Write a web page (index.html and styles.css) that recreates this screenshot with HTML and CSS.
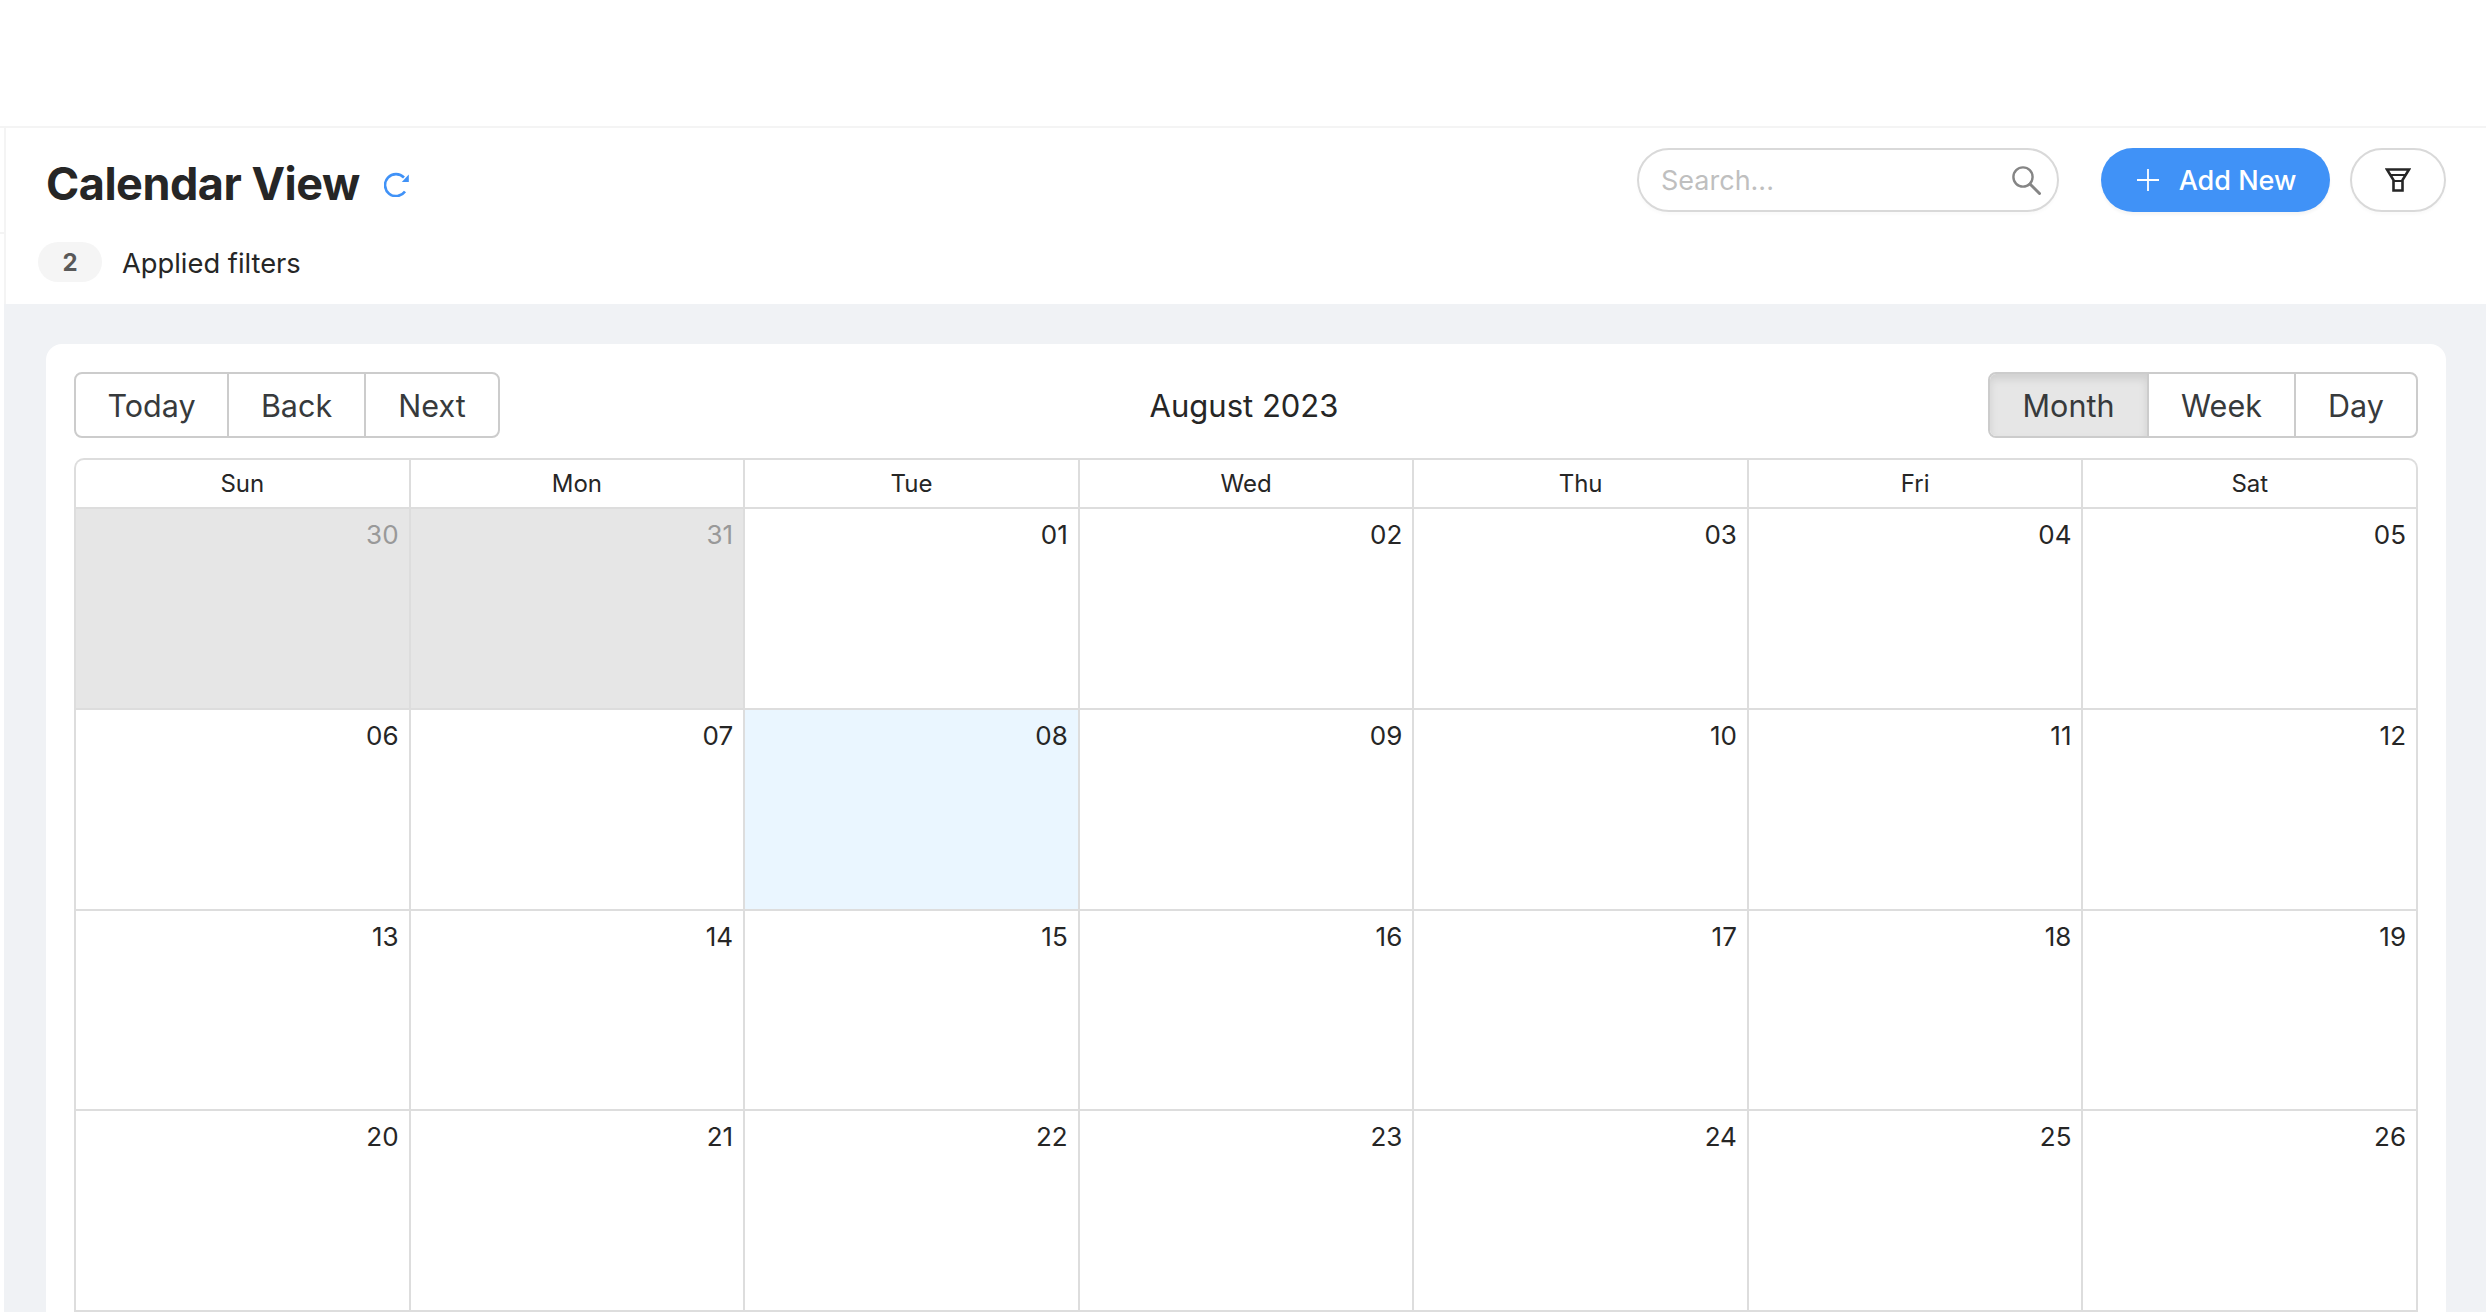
FILE: index.html
```html
<!DOCTYPE html>
<html lang="en">
<head>
    <meta charset="UTF-8">
    <meta name="viewport" content="width=device-width, initial-scale=1.0">
    <title>Calendar View</title>
    <link rel="stylesheet" href="styles.css">
</head>
<body>
    <div class="topbar"></div>
    <div class="shell">
        <div class="rail"><div class="rail-item"></div></div>
        <div class="main">
            <div class="head">
                <div class="head-row">
                    <div class="title-wrap">
                        <h1 class="title">Calendar View</h1>
                        <svg class="refresh" viewBox="0 0 25 25" fill="none" stroke="#4092f7" stroke-width="2.6">
                            <path d="M21 19.5A11 11 0 1 1 20 5.5"/>
                            <path d="M24.8 2.5V10H17.8Z" fill="#4092f7" stroke="none"/>
                        </svg>
                    </div>
                    <div class="actions">
                        <div class="search">
                            <span class="placeholder">Search...</span>
                            <svg class="search-icon" viewBox="0 0 30 30" fill="none" stroke="#858585" stroke-width="2.4">
                                <circle cx="12" cy="12" r="9.6"/>
                                <path d="M19 19L28.5 28.5" stroke-linecap="round" stroke-width="3"/>
                            </svg>
                        </div>
                        <div class="add-btn">
                            <svg class="plus" viewBox="0 0 22 22" stroke="#fff" stroke-width="1.8"><path d="M11 0V22M0 11H22"/></svg>
                            <span>Add New</span>
                        </div>
                        <div class="filter-btn">
                            <svg class="filter-icon" viewBox="0 0 26 24" fill="none" stroke="#262626" stroke-width="2.6">
                                <path d="M2 1.5H24L17.5 12V22.5H8.5V12Z"/>
                                <path d="M5 7H21" stroke-width="2"/>
                                <path d="M8.5 13H17.5" stroke-width="2"/>
                            </svg>
                        </div>
                    </div>
                </div>
                <div class="filters">
                    <span class="badge">2</span>
                    <span class="filters-label">Applied filters</span>
                </div>
            </div>
            <div class="content">
                <div class="card">
                    <div class="toolbar">
                        <div class="btn-group">
                            <div class="btn btn-today">Today</div>
                            <div class="btn btn-back">Back</div>
                            <div class="btn btn-next">Next</div>
                        </div>
                        <div class="month-label">August 2023</div>
                        <div class="btn-group">
                            <div class="btn btn-month active">Month</div>
                            <div class="btn btn-week">Week</div>
                            <div class="btn btn-day">Day</div>
                        </div>
                    </div>
                    <div class="cal">
                        <div class="cal-head">
                            <div>Sun</div><div>Mon</div><div>Tue</div><div>Wed</div><div>Thu</div><div>Fri</div><div>Sat</div>
                        </div>
                        <div class="cal-row">
                            <div class="day off">30</div><div class="day off">31</div><div class="day">01</div><div class="day">02</div><div class="day">03</div><div class="day">04</div><div class="day">05</div>
                        </div>
                        <div class="cal-row">
                            <div class="day">06</div><div class="day">07</div><div class="day today">08</div><div class="day">09</div><div class="day">10</div><div class="day">11</div><div class="day">12</div>
                        </div>
                        <div class="cal-row">
                            <div class="day">13</div><div class="day">14</div><div class="day">15</div><div class="day">16</div><div class="day">17</div><div class="day">18</div><div class="day">19</div>
                        </div>
                        <div class="cal-row">
                            <div class="day">20</div><div class="day">21</div><div class="day">22</div><div class="day">23</div><div class="day">24</div><div class="day">25</div><div class="day">26</div>
                        </div>
                    </div>
                </div>
            </div>
        </div>
    </div>
</body>
</html>
```

FILE: styles.css
```css
* { margin: 0; padding: 0; box-sizing: border-box; }
html, body { height: 1312px; overflow: hidden; }
body {
    font-family: Inter, "Noto Sans", sans-serif;
    color: #262626;
    background-color: #fff;
}

.topbar {
    height: 128px;
    border-bottom: 2px solid #f4f4f4;
}
.shell {
    display: flex;
    height: 1184px;
}
.rail { width: 4px; flex: none; }
.rail-item {
    height: 106px;
    border-bottom: 2px solid #f4f4f4;
}
.main {
    flex: 1;
    display: flex;
    flex-direction: column;
    min-width: 0;
}

/* page head */
.head {
    height: 176px;
    flex: none;
    border-left: 2px solid #f4f4f4;
    padding: 20px 40px 0 32px;
}
.head-row {
    display: flex;
    justify-content: space-between;
    align-items: flex-start;
}
.title-wrap {
    display: flex;
    align-items: center;
    height: 64px;
    padding-left: 8px;
}
.title {
    font-size: 45px;
    font-weight: 700;
    letter-spacing: -0.5px;
    margin-top: 6px;
}
.refresh {
    width: 25px;
    height: 25px;
    margin-left: 24px;
    margin-top: 8px;
}
.actions {
    display: flex;
    align-items: flex-start;
}
.search {
    width: 422px;
    height: 64px;
    border: 2px solid #d9d9d9;
    border-radius: 32px;
    display: flex;
    align-items: center;
    justify-content: space-between;
    padding: 0 16px 0 22px;
    box-shadow: 0 3px 3px rgba(0, 0, 0, 0.02);
}
.placeholder {
    font-size: 27px;
    color: #bfbfbf;
}
.search-icon { width: 30px; height: 30px; }
.add-btn {
    width: 229px;
    height: 64px;
    margin-left: 42px;
    padding-left: 2px;
    background-color: #4092f7;
    border-radius: 32px;
    color: #fff;
    font-size: 27px;
    font-weight: 500;
    display: flex;
    align-items: center;
    justify-content: center;
    gap: 20px;
    box-shadow: 0 3px 3px rgba(0, 0, 0, 0.04);
}
.plus { width: 22px; height: 22px; }
.filter-btn {
    width: 96px;
    height: 64px;
    margin-left: 20px;
    border: 2px solid #d9d9d9;
    border-radius: 32px;
    display: flex;
    align-items: center;
    justify-content: center;
    box-shadow: 0 3px 3px rgba(0, 0, 0, 0.02);
}
.filter-icon { width: 26px; height: 24px; }
.filters {
    display: flex;
    align-items: center;
    margin-top: 30px;
}
.badge {
    width: 64px;
    height: 40px;
    border-radius: 20px;
    background-color: #f5f5f5;
    color: #595959;
    font-size: 24px;
    font-weight: 700;
    display: flex;
    align-items: center;
    justify-content: center;
}
.filters-label {
    font-size: 27.3px;
    margin-left: 20px;
    margin-top: 3px;
}

/* calendar card */
.content {
    flex: 1;
    background-color: #f0f2f5;
    padding: 40px 40px 0 42px;
    min-height: 0;
}
.card {
    height: 100%;
    background-color: #fff;
    border-radius: 16px 16px 0 0;
    padding: 28px 28px 0;
    display: flex;
    flex-direction: column;
}
.toolbar {
    display: flex;
    justify-content: space-between;
    align-items: center;
    height: 66px;
    margin-bottom: 20px;
    flex: none;
}
.btn-group {
    display: flex;
    height: 66px;
    border: 2px solid #ccc;
    border-radius: 8px;
    overflow: hidden;
}
.btn {
    display: flex;
    align-items: center;
    justify-content: center;
    font-size: 30.5px;
    color: #373a3c;
}
.btn + .btn { border-left: 2px solid #ccc; }
.btn-today { width: 151px; }
.btn-back { width: 137px; }
.btn-next { width: 134px; }
.btn-month { width: 157px; }
.btn-week { width: 147px; }
.btn-day { width: 122px; }
.active {
    background-color: #e6e6e6;
    box-shadow: inset 0 5px 8px rgba(0, 0, 0, 0.1);
}
.month-label {
    font-size: 31px;
    color: #262626;
}

.cal {
    flex: 1;
    display: flex;
    flex-direction: column;
    border: 2px solid #ddd;
    border-bottom: 0;
    border-top-left-radius: 10px;
    border-top-right-radius: 10px;
    overflow: hidden;
}
.cal-head {
    display: flex;
    height: 49px;
    flex: none;
    border-bottom: 2px solid #ddd;
}
.cal-head div {
    flex: 1;
    display: flex;
    align-items: center;
    justify-content: center;
    font-size: 24px;
}
.cal-head div + div { border-left: 2px solid #ddd; }
.cal-row {
    flex: 1;
    display: flex;
    border-bottom: 2px solid #ddd;
}
.day {
    flex: 1;
    padding: 10px 10px 0 0;
    text-align: right;
    font-size: 26px;
    line-height: 32px;
}
.day + .day { border-left: 2px solid #ddd; }
.off {
    background-color: #e6e6e6;
    color: #999;
}
.today { background-color: #eaf6ff; }
```
